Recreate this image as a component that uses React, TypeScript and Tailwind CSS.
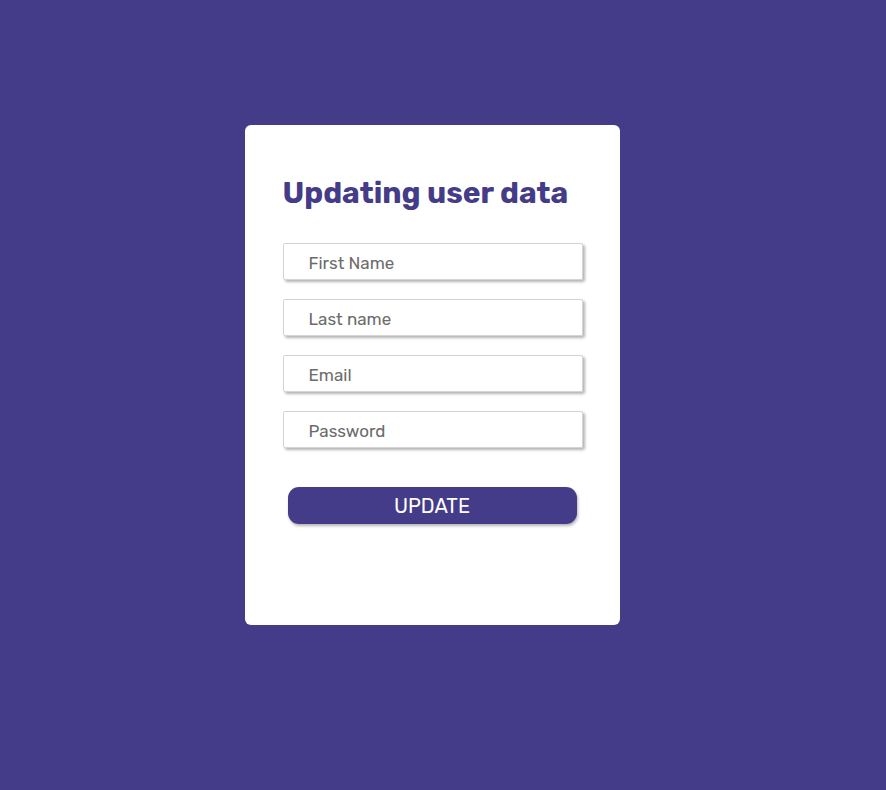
const fields = ['First Name', 'Last name', 'Email', 'Password'];

export default function App() {
  return (
    <div className="min-h-screen w-full bg-[#443c88] flex justify-center pr-[22px] pt-[125px] font-['Rubik','Inter','Noto_Sans',sans-serif]">
      <div className="w-[375px] h-[500px] bg-white rounded-[6px] px-[38px] pt-[50px]">
        <h1 className="text-[30px] leading-[36px] font-bold text-[#443c88]">Updating user data</h1>
        <form className="mt-[32px] flex flex-col gap-[19px]" onSubmit={(e) => e.preventDefault()}>
          {fields.map((f) => (
            <input
              key={f}
              type={f === 'Password' ? 'password' : 'text'}
              placeholder={f}
              className="w-[300px] h-[37px] border border-[#d4d4d4] rounded-[2px] shadow-[2px_2px_3px_rgba(0,0,0,0.3)] pl-[25px] pt-[2px] text-[17px] text-[#444] placeholder:text-[#6b6b6b] outline-none"
            />
          ))}
          <button
            type="submit"
            className="mt-[20px] ml-[5px] w-[289px] h-[37px] rounded-[11px] bg-[#443c88] text-white text-[20px] shadow-[1px_2px_3px_rgba(0,0,0,0.3)]"
          >
            UPDATE
          </button>
        </form>
      </div>
    </div>
  );
}
